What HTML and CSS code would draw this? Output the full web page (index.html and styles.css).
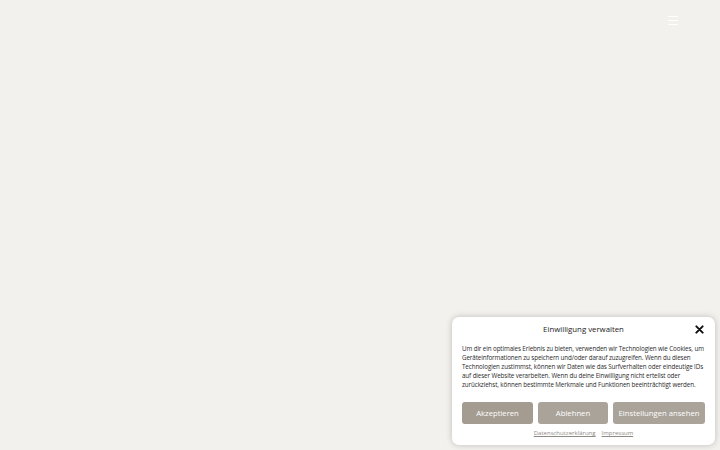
FILE: index.html
```html
<!DOCTYPE html>
<html lang="de">
<head>
<meta charset="utf-8">
<link rel="stylesheet" href="styles.css">
</head>
<body>
<header class="top">
  <button class="burger" aria-label="Menü"><span></span><span></span><span></span></button>
</header>
<div class="banner">
  <div class="head">
    <div class="title">Einwilligung verwalten</div>
    <svg class="close" viewBox="0 0 10 10" width="9" height="9"><path d="M1.5 1.5 L8.5 8.5 M8.5 1.5 L1.5 8.5" stroke="#111" stroke-width="2.2" stroke-linecap="round"/></svg>
  </div>
  <p class="msg">Um dir ein optimales Erlebnis zu bieten, verwenden wir Technologien wie Cookies, um Geräteinformationen zu speichern und/oder darauf zuzugreifen. Wenn du diesen Technologien zustimmst, können wir Daten wie das Surfverhalten oder eindeutige IDs auf dieser Website verarbeiten. Wenn du deine Einwilligung nicht erteilst oder zurückziehst, können bestimmte Merkmale und Funktionen beeinträchtigt werden.</p>
  <div class="buttons">
    <button class="btn b1">Akzeptieren</button>
    <button class="btn b2">Ablehnen</button>
    <button class="btn b3">Einstellungen ansehen</button>
  </div>
  <div class="links"><a href="#">Datenschutzerklärung</a><a href="#">Impressum</a></div>
</div>
</body>
</html>
```
FILE: styles.css
```css
html, body { margin: 0; padding: 0; }
body {
  width: 720px; height: 450px; overflow: hidden;
  background: #f3f1ed;
  font-family: "Open Sans", "Liberation Sans", sans-serif;
  position: relative;
}
.top { display: flex; justify-content: flex-end; padding: 16px 42px 0 0; }
.burger {
  display: flex; flex-direction: column; gap: 2.6px;
  background: none; border: 0; padding: 0; width: 10px;
}
.burger span { display: block; height: 1.3px; width: 10px; background: #fff; }
.banner {
  position: absolute; left: 452px; top: 317px;
  width: 263px; height: 128px; box-sizing: border-box;
  background: #fff; border-radius: 7px;
  box-shadow: 0 0 6px rgba(0,0,0,0.22);
  padding: 6px 10px 0 10px;
}
.head { position: relative; display: flex; justify-content: center; align-items: center; height: 12px; }
.title { font-size: 7.8px; color: #222; }
.close { position: absolute; right: 1px; top: 2px; }
.msg {
  margin: 9px -2px 0 0; font-size: 6.25px; line-height: 9px; color: #2a2a2a;
  letter-spacing: -0.1px;
}
.buttons { display: flex; gap: 5px; margin-top: 13px; }
.btn {
  height: 22px; border: 0; border-radius: 3px; padding: 0;
  background: #a69e94; color: #fff;
  font-family: inherit; font-size: 7.7px;
}
.b1 { width: 71px; background: #a49b91; }
.b2 { width: 70px; background: #aaa39a; }
.b3 { width: 92px; background: #aaa39a; }
.links { display: flex; justify-content: center; gap: 6px; margin-top: 5px; }
.links a { font-size: 6px; color: #8e8a86; text-decoration: underline; }
```
